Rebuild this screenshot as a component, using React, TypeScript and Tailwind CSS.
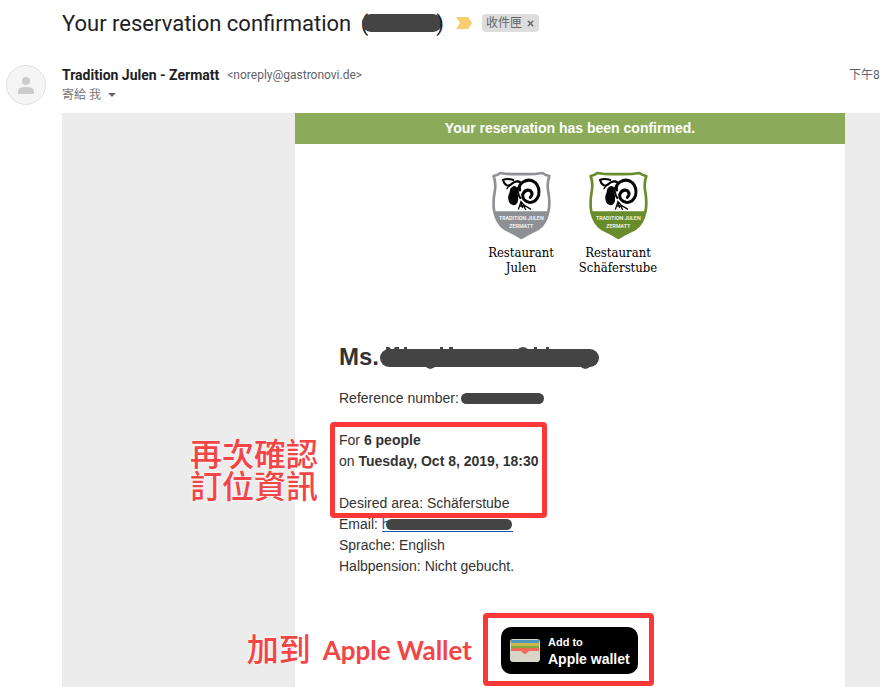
import React from "react";
import { X } from "lucide-react";

const details = [
  { label: "Sprache", value: "English" },
  { label: "Halbpension", value: "Nicht gebucht." },
];

const Crest: React.FC<{ color: string; x: number }> = ({ color, x }) => (
  <g transform={`translate(${x} 0) scale(0.3333)`}>
    <path
      d="M26 24 Q38 22 46 15 Q76 20 108 18 Q142 20 172 15 Q181 22 193 24 Q185 48 190 72 Q196 105 190 132 Q182 170 158 184 Q128 198 109 210 Q91 198 61 184 Q37 170 28 132 Q23 105 29 72 Q34 48 26 24 Z"
      fill="#fff"
      stroke={color}
      strokeWidth="8"
      strokeLinejoin="round"
    />
    <path d="M28 130 H190 Q182 170 158 184 Q128 198 109 210 Q91 198 61 184 Q37 170 28 130 Z" fill={color} />
    {/* Ram head and horns */}
    <g stroke="#050505" fill="none" strokeLinecap="round">
      <path d="M85 36 Q66 30 54 36 Q56 46 65 52 Q76 54 82 46 Q92 38 104 42" strokeWidth="6" />
      <path d="M66 62 Q76 46 92 40 Q104 36 110 48" strokeWidth="4" />
      <path d="M104 66 Q100 50 114 42 Q134 30 151 44 Q165 58 161 82 Q153 105 132 103 Q112 98 113 80 Q121 62 136 68 Q146 78 136 88" strokeWidth="9" />
      <path d="M100 58 Q94 68 100 76 Q100 84 106 90" strokeWidth="6" />
    </g>
    <path d="M76 62 Q84 50 94 56 Q100 62 96 72 Q101 84 99 98 Q96 111 86 112 Q72 110 70 94 Q68 84 73 76 Z" fill="#050505" />
    <path d="M100 125 L108 101 L118 112 L138 124 M108 104 L113 120 M104 114 H116 M116 112 L122 126" fill="none" stroke="#050505" strokeWidth="4" />
    <g textAnchor="middle" fill="#fff" fontSize="16" fontWeight="500" fontFamily="'Roboto', sans-serif">
      <text x="109" y="155">TRADITION JULEN</text>
      <text x="109" y="179">ZERMATT</text>
    </g>
  </g>
);

const Logos: React.FC = () => (
  <svg className="mx-auto block" width="180" height="110" viewBox="0 0 180 110" role="img" aria-label="Restaurant Julen and Restaurant Schäferstube">
    <Crest color="#8f9094" x={5} />
    <Crest color="#688b2b" x={102} />
    <g textAnchor="middle" fill="#000" fontSize="13" fontFamily="'DejaVu Serif Condensed', 'DejaVu Serif', serif">
      <text x="41" y="89">Restaurant</text>
      <text x="41" y="104">Julen</text>
      <text x="138" y="89">Restaurant</text>
      <text x="138" y="104">Schäferstube</text>
    </g>
  </svg>
);

const WalletIcon: React.FC = () => (
  <svg width="30" height="23" viewBox="0 0 30 23" aria-hidden="true">
    <clipPath id="wallet">
      <rect width="30" height="23" rx="3" />
    </clipPath>
    <g clipPath="url(#wallet)">
      <rect width="30" height="23" fill="#d9d5c9" />
      <rect x="1" y="1" width="28" height="3" fill="#4f97bd" />
      <rect x="1" y="4" width="28" height="3" fill="#c9b84a" />
      <rect x="1" y="7" width="28" height="3" fill="#7fa93c" />
      <path d="M1 9 H29 V12 H20 Q18 12 17 14 Q15 16 13 14 Q12 12 10 12 H1 Z" fill="#ee6a59" />
    </g>
  </svg>
);

const App: React.FC = () => {
  return (
    <div className="min-h-screen overflow-hidden bg-white font-['Roboto','Noto_Sans_CJK_TC',sans-serif]">
      <header className="flex h-[46px] items-center pl-[62px]">
        <h1 className="flex items-center whitespace-nowrap text-[22px] text-[#202124]">
          Your reservation confirmation&nbsp;
          <span className="ml-1">(</span>
          <span className="-mx-[6px] h-[18px] w-20 rounded-full bg-[#444]" />)
        </h1>
        <svg className="ml-3 shrink-0" width="16" height="12" viewBox="0 0 16 12" aria-hidden="true">
          <path d="M0 0 H11 Q12 0 13 1 L16 6 L13 11 Q12 12 11 12 H0 L4 6 Z" fill="#f8cd70" />
        </svg>
        <span className="ml-[10px] flex h-[18px] shrink-0 items-center gap-1 rounded bg-[#ddd] px-1 text-xs text-[#666]">
          收件匣
          <button aria-label="Remove label">
            <X size={9} strokeWidth={4} />
          </button>
        </span>
      </header>

      <section className="flex h-[67px] items-start pt-[19px]">
        <div className="mr-4 ml-[6px] flex size-10 shrink-0 items-center justify-center rounded-full border border-[#e0e0e0] bg-[#f5f5f5]">
          <svg width="16" height="17" viewBox="0 0 16 17" fill="#ccc" aria-hidden="true">
            <circle cx="8" cy="4" r="4" />
            <path d="M0 17 V14 Q0 10 8 10 Q16 10 16 14 V17 Z" />
          </svg>
        </div>
        <div className="flex-1 whitespace-nowrap">
          <p className="flex h-5 items-center gap-2">
            <strong className="text-sm text-[#202124]">Tradition Julen - Zermatt</strong>
            <span className="text-xs text-[#5f6368]">&lt;noreply@gastronovi.de&gt;</span>
          </p>
          <button className="flex h-5 items-center text-xs text-[#777]">
            寄給 我
            <svg className="ml-[7px]" width="8" height="4" viewBox="0 0 8 4" fill="#666" aria-hidden="true">
              <path d="M0 0 H8 L4 4 Z" />
            </svg>
          </button>
        </div>
        <time className="w-[31px] shrink-0 overflow-hidden text-xs leading-5 whitespace-nowrap text-[#5f6368]">下午8</time>
      </section>

      <main className="ml-[62px] bg-[#ececec] pr-[35px] pl-[233px] font-['Liberation_Sans',sans-serif] text-sm leading-[21px] text-[#333]">
        <article className="bg-white">
          <p className="bg-[#8cab5a] py-[5px] text-center font-bold text-white">Your reservation has been confirmed.</p>
          <div className="pt-6">
            <Logos />
          </div>

          <div className="pt-[65px] pl-11">
            <h2 className="flex h-7 items-center text-2xl font-bold">
              Ms.
              <svg className="ml-px shrink-0" width="219" height="24" viewBox="0 0 219 24" fill="#444" aria-hidden="true">
                <rect y="4" width="219" height="18" rx="9" />
                <path d="M6 2 H9 L12 5 H6 Z M13 5 L15 2 H19 V5 Z M24 2 H27 V5 H24 Z M60 2 H63 V5 H60 Z M69 2 H73 V5 H69 Z M137 5 Q143 -1 149 5 Z M154 2 H157 V5 H154 Z M166 2 H169 V5 H166 Z M45 21 Q50 27 56 21 Z M200 21 Q205 27 211 21 Z" />
              </svg>
            </h2>

            <p className="mt-[17px] flex items-center">
              Reference number:
              <span className="ml-[2px] h-[11px] w-[83px] rounded-full bg-[#444]" />
            </p>

            <div className="relative mt-[21px]">
              <p>For <strong>6 people</strong></p>
              <p>on <strong>Tuesday, Oct 8, 2019, 18:30</strong></p>
              <p className="mt-[21px]">Desired area: Schäferstube</p>
              <div className="absolute -top-2 -left-[9px] z-10 h-24 w-[217px] rounded-sm border-5 border-[#fa3838]" />
              <p className="absolute top-[6px] right-full mr-[21px] text-center font-['Noto_Sans_CJK_TC',sans-serif] text-[32px] leading-8 font-medium whitespace-nowrap text-[#f34545] [text-shadow:0_0_3px_white]">
                再次確認
                <br />
                訂位資訊
              </p>
            </div>

            <p className="flex">
              Email:&nbsp;
              <a href="#email" aria-label="Email address" className="relative h-[18px] w-[131px] border-b border-[#1f4fae] text-[#1f4fae]">
                h
                <span className="absolute top-[5px] left-1 h-[11px] w-[126px] rounded-full bg-[#444]" />
              </a>
            </p>
            {details.map((item) => (
              <p key={item.label}>
                {item.label}: {item.value}
              </p>
            ))}
          </div>

          <div className="mt-[50px] pb-[13px] pl-[206px]">
            <div className="relative w-[137px]">
              <button className="flex h-[47px] w-full items-center gap-2 rounded-[10px] bg-black pl-[9px] text-left font-bold whitespace-nowrap text-white">
                <WalletIcon />
                <span className="flex flex-col">
                  <span className="text-[11px] leading-4">Add to</span>
                  <span className="text-sm leading-[18px]">Apple wallet</span>
                </span>
              </button>
              <div className="absolute -top-[14px] -left-[18px] h-[73px] w-[171px] rounded-sm border-5 border-[#fa3838]" />
              <p className="absolute top-0 right-full mr-[29px] flex items-start gap-3 font-['Lato',sans-serif] text-[26px] leading-[46px] font-bold whitespace-nowrap text-[#f34545] [text-shadow:0_0_3px_white]">
                <span className="font-['Noto_Sans_CJK_TC',sans-serif] text-[32px] leading-10 font-medium">加到</span>
                Apple Wallet
              </p>
            </div>
          </div>
        </article>
      </main>
    </div>
  );
};

export default App;
